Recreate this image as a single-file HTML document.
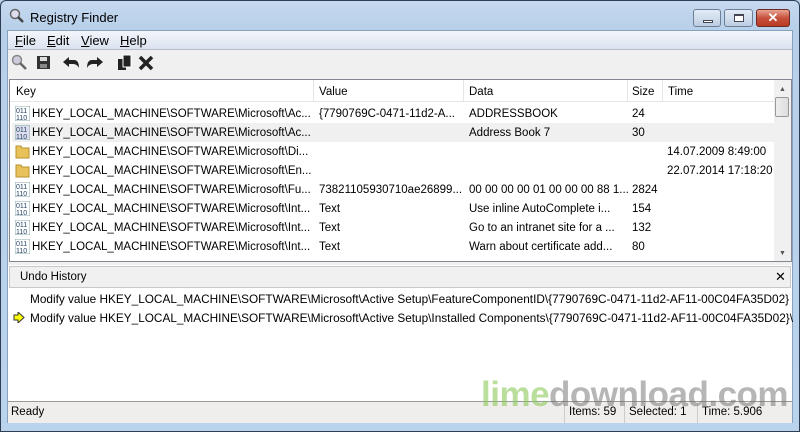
<!DOCTYPE html>
<html><head><meta charset="utf-8"><style>
*{margin:0;padding:0;box-sizing:border-box}
body{width:800px;height:432px;overflow:hidden;font-family:"Liberation Sans",sans-serif;font-size:11.5px;color:#000;background:#bad3ec;position:relative}
.a{position:absolute;white-space:nowrap}
#frame{left:0;top:0;width:800px;height:432px;border:1px solid #2d3e52;border-radius:6px 6px 0 0;background:linear-gradient(#c5d9ef,#b7cfe9 30px,#bad3ec)}
#client{left:7px;top:30px;width:786px;height:393px;background:#f0f0f0;border:1px solid #8aa1bb}
.row{position:absolute;left:12px;width:762px;height:19px;line-height:20px;white-space:nowrap}
.row span{position:absolute;top:0;white-space:nowrap}
.ic{position:absolute;left:3px;top:2px;width:15px;height:15px}
</style></head><body>
<div class="a" id="frame"></div>
<svg class="a" style="left:9px;top:8px" width="16" height="16"><circle cx="6" cy="6" r="4.5" fill="#dde" stroke="#666" stroke-width="1.5"/><line x1="9" y1="9" x2="14" y2="14" stroke="#444" stroke-width="2.5"/></svg>
<div class="a" style="left:30px;top:10px;font-size:13px">Registry Finder</div>
<div class="a" style="left:693px;top:9px;width:28px;height:18px;border:1px solid #6d7f96;border-radius:3px;background:linear-gradient(#e3ecf6,#bccde2)"><div class="a" style="left:9px;top:10px;width:10px;height:3px;border:1px solid #445;background:#fff"></div></div>
<div class="a" style="left:724px;top:9px;width:29px;height:18px;border:1px solid #6d7f96;border-radius:3px;background:linear-gradient(#e3ecf6,#bccde2)"><div class="a" style="left:9px;top:4px;width:10px;height:8px;border:1px solid #445;border-top-width:2px;background:#fff"></div></div>
<div class="a" style="left:756px;top:9px;width:34px;height:18px;border:1px solid #6e2a22;border-radius:3px;background:linear-gradient(#e8a493,#c7503b 50%,#b83a24);color:#fff;font-weight:bold;text-align:center;line-height:16px;font-size:13px">✕</div>
<div class="a" id="client"></div>
<div class="a" style="left:8px;top:31px;width:784px;height:19px;background:linear-gradient(#f3f6fb,#dbe3f0);border-bottom:1px solid #b6bcc6"></div>
<div class="a" style="left:15px;top:33px;font-size:13px"><u>F</u>ile</div>
<div class="a" style="left:47px;top:33px;font-size:13px"><u>E</u>dit</div>
<div class="a" style="left:81px;top:33px;font-size:13px"><u>V</u>iew</div>
<div class="a" style="left:120px;top:33px;font-size:13px"><u>H</u>elp</div>
<svg class="a" style="left:11px;top:54px" width="150" height="18">
<circle cx="6" cy="6" r="4.5" fill="#ccd" stroke="#888" stroke-width="1.5"/><line x1="9" y1="9" x2="15" y2="15" stroke="#666" stroke-width="2.5"/>
<rect x="26" y="2" width="13" height="13" fill="#333"/><rect x="29" y="3" width="7" height="4" fill="#ddd"/><rect x="29" y="10" width="7" height="4" fill="#888"/>
<path d="M52 8 L58 3 V6 H63 Q68 6 68 14 Q66 10 62 10 H58 V13Z" fill="#222"/>
<path d="M92 8 L86 3 V6 H81 Q76 6 76 14 Q78 10 82 10 H86 V13Z" fill="#222"/>
<rect x="107" y="5" width="8" height="11" fill="#222"/><rect x="112" y="1" width="8" height="12" fill="#222" stroke="#fff" stroke-width="1"/>
<path d="M129 3 L141 15 M141 3 L129 15" stroke="#222" stroke-width="3.5"/>
</svg>
<div class="a" style="left:9px;top:79px;width:783px;height:183px;background:#fff;border:1px solid #828790"></div>
<div class="a" style="left:10px;top:80px;width:764px;height:22px;background:#fff;border-bottom:1px solid #e5e5e5"></div>
<div class="a" style="left:16px;top:86px">Key</div>
<div class="a" style="left:313px;top:80px;width:1px;height:22px;background:#e5e5e5"></div>
<div class="a" style="left:319px;top:86px">Value</div>
<div class="a" style="left:463px;top:80px;width:1px;height:22px;background:#e5e5e5"></div>
<div class="a" style="left:469px;top:86px">Data</div>
<div class="a" style="left:627px;top:80px;width:1px;height:22px;background:#e5e5e5"></div>
<div class="a" style="left:632px;top:86px">Size</div>
<div class="a" style="left:662px;top:80px;width:1px;height:22px;background:#e5e5e5"></div>
<div class="a" style="left:668px;top:86px">Time</div>
<div class="a" style="left:774px;top:80px;width:17px;height:181px;background:#f0f0f0"></div>
<div class="a" style="left:779px;top:86px;font-size:7px;color:#555">▲</div>
<div class="a" style="left:775px;top:97px;width:14px;height:20px;border:1px solid #999;border-radius:2px;background:linear-gradient(90deg,#eee,#ddd)"></div>
<div class="a" style="left:779px;top:250px;font-size:7px;color:#555">▼</div>
<div class="row" style="top:104px"><svg class="ic"><rect x="0" y="0" width="15" height="15" fill="#fff" stroke="#8aa" /><text x="1" y="7" font-size="7" fill="#246">011</text><text x="1" y="14" font-size="7" fill="#246">110</text></svg><span style="left:20px">HKEY_LOCAL_MACHINE\SOFTWARE\Microsoft\Ac...</span><span style="left:307px">{7790769C-0471-11d2-A...</span><span style="left:457px">ADDRESSBOOK</span><span style="left:620px">24</span></div>
<div class="row" style="top:123px;background:#f0f0f0"><svg class="ic"><rect x="0" y="0" width="15" height="15" fill="#dde" stroke="#8aa" /><text x="1" y="7" font-size="7" fill="#246">011</text><text x="1" y="14" font-size="7" fill="#246">110</text></svg><span style="left:20px">HKEY_LOCAL_MACHINE\SOFTWARE\Microsoft\Ac...</span><span style="left:457px">Address Book 7</span><span style="left:620px">30</span></div>
<div class="row" style="top:142px"><svg class="ic"><path d="M1 2 H6 L7 4 H14 V14 H1Z" fill="#e8c15a" stroke="#b8922e"/></svg><span style="left:20px">HKEY_LOCAL_MACHINE\SOFTWARE\Microsoft\Di...</span><span style="left:655px">14.07.2009 8:49:00</span></div>
<div class="row" style="top:161px"><svg class="ic"><path d="M1 2 H6 L7 4 H14 V14 H1Z" fill="#e8c15a" stroke="#b8922e"/></svg><span style="left:20px">HKEY_LOCAL_MACHINE\SOFTWARE\Microsoft\En...</span><span style="left:655px">22.07.2014 17:18:20</span></div>
<div class="row" style="top:180px"><svg class="ic"><rect x="0" y="0" width="15" height="15" fill="#fff" stroke="#8aa" /><text x="1" y="7" font-size="7" fill="#246">011</text><text x="1" y="14" font-size="7" fill="#246">110</text></svg><span style="left:20px">HKEY_LOCAL_MACHINE\SOFTWARE\Microsoft\Fu...</span><span style="left:307px">73821105930710ae26899...</span><span style="left:457px">00 00 00 00 01 00 00 00 88 1...</span><span style="left:620px">2824</span></div>
<div class="row" style="top:199px"><svg class="ic"><rect x="0" y="0" width="15" height="15" fill="#fff" stroke="#8aa" /><text x="1" y="7" font-size="7" fill="#246">011</text><text x="1" y="14" font-size="7" fill="#246">110</text></svg><span style="left:20px">HKEY_LOCAL_MACHINE\SOFTWARE\Microsoft\Int...</span><span style="left:307px">Text</span><span style="left:457px">Use inline AutoComplete i...</span><span style="left:620px">154</span></div>
<div class="row" style="top:218px"><svg class="ic"><rect x="0" y="0" width="15" height="15" fill="#fff" stroke="#8aa" /><text x="1" y="7" font-size="7" fill="#246">011</text><text x="1" y="14" font-size="7" fill="#246">110</text></svg><span style="left:20px">HKEY_LOCAL_MACHINE\SOFTWARE\Microsoft\Int...</span><span style="left:307px">Text</span><span style="left:457px">Go to an intranet site for a ...</span><span style="left:620px">132</span></div>
<div class="row" style="top:237px"><svg class="ic"><rect x="0" y="0" width="15" height="15" fill="#fff" stroke="#8aa" /><text x="1" y="7" font-size="7" fill="#246">011</text><text x="1" y="14" font-size="7" fill="#246">110</text></svg><span style="left:20px">HKEY_LOCAL_MACHINE\SOFTWARE\Microsoft\Int...</span><span style="left:307px">Text</span><span style="left:457px">Warn about certificate add...</span><span style="left:620px">80</span></div>
<div class="a" style="left:8px;top:265px;width:784px;height:137px;background:#fff"></div>
<div class="a" style="left:9px;top:266px;width:782px;height:22px;background:#f0f0f0;border:1px solid #c8c8c8"></div>
<div class="a" style="left:20px;top:271px">Undo History</div>
<div class="a" style="left:775px;top:269px;font-size:13px">✕</div>
<div class="a" style="left:30px;top:292px;font-size:11.8px">Modify value HKEY_LOCAL_MACHINE\SOFTWARE\Microsoft\Active Setup\FeatureComponentID\{7790769C-0471-11d2-AF11-00C04FA35D02}</div>
<svg class="a" style="left:13px;top:312px" width="12" height="11"><path d="M1 3 H5 V0 L11 5.5 L5 11 V8 H1Z" fill="#ff0" stroke="#333"/></svg>
<div class="a" style="left:30px;top:311px;font-size:11.8px">Modify value HKEY_LOCAL_MACHINE\SOFTWARE\Microsoft\Active Setup\Installed Components\{7790769C-0471-11d2-AF11-00C04FA35D02}\</div>
<div class="a" style="left:8px;top:401px;width:784px;height:22px;background:#f0eeec;border-top:1px solid #999"></div>
<div class="a" style="left:11px;top:406px">Ready</div>
<div class="a" style="left:564px;top:403px;width:1px;height:20px;background:#ccc"></div>
<div class="a" style="left:569px;top:406px">Items: 59</div>
<div class="a" style="left:624px;top:403px;width:1px;height:20px;background:#ccc"></div>
<div class="a" style="left:629px;top:406px">Selected: 1</div>
<div class="a" style="left:697px;top:403px;width:1px;height:20px;background:#ccc"></div>
<div class="a" style="left:702px;top:406px">Time: 5.906</div>
<div class="a" style="left:481px;top:375px;font-size:35px;font-weight:bold;letter-spacing:-0.5px;color:rgba(110,110,110,.5)"><span style="color:rgba(140,200,90,.6)">lime</span>download.com</div>
</body></html>
